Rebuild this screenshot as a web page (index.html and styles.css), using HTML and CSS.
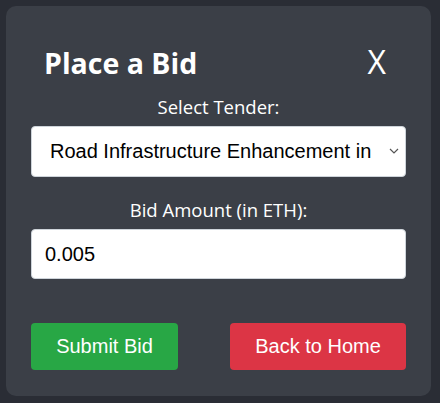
FILE: index.html
```html
<!DOCTYPE html>
<html>
<head>
<meta charset="utf-8">
<link rel="stylesheet" href="styles.css">
</head>
<body>
<div class="card">
  <div class="header">
    <h2 class="title">Place a Bid</h2>
    <span class="close">X</span>
  </div>
  <label class="label">Select Tender:</label>
  <div class="select-wrap">
    <div class="select">Road Infrastructure Enhancement in</div>
    <svg class="chev" width="10" height="6" viewBox="0 0 10 6"><path d="M1 1 L5 5 L9 1" fill="none" stroke="#555" stroke-width="1.2"/></svg>
  </div>
  <label class="label second">Bid Amount (in ETH):</label>
  <div class="input">0.005</div>
  <div class="buttons">
    <button class="btn green">Submit Bid</button>
    <button class="btn red">Back to Home</button>
  </div>
</div>
</body>
</html>
```

FILE: styles.css
```css
html, body { margin: 0; padding: 0; }
body {
  background: #2a2d35;
  width: 440px;
  height: 403px;
  padding: 6px 0 0 6px;
  box-sizing: border-box;
}
.card {
  width: 425px;
  height: 390px;
  box-sizing: border-box;
  background: #3b3f47;
  border-radius: 10px;
  padding: 0 25px;
  display: flex;
  flex-direction: column;
  font-family: "Open Sans", sans-serif;
  color: #fff;
}
.header {
  display: flex;
  justify-content: space-between;
  align-items: center;
  padding: 32px 20px 0 13px;
  height: 50px;
}
.title {
  margin: 0;
  font-size: 28.5px;
  font-weight: 700;
}
.close {
  font-family: "Open Sans", sans-serif;
  font-size: 32px;
  line-height: 40px;
  margin-top: -3px;
}
.label {
  display: block;
  text-align: center;
  font-size: 18.5px;
  line-height: 24px;
  margin-top: 7px;
  margin-bottom: 7px;
}
.label.second { margin-top: 21px; }
.select-wrap {
  position: relative;
}
.select, .input {
  background: #fff;
  border: 1px solid #ced4da;
  border-radius: 4px;
  height: 51px;
  box-sizing: border-box;
  color: #000;
  font-family: "Liberation Sans", Arial, sans-serif;
  font-size: 20px;
  display: flex;
  align-items: center;
}
.select { padding-left: 18px; }
.input { padding-left: 13px; height: 50px; }
.chev {
  position: absolute;
  right: 7px;
  top: 22px;
}
.buttons {
  display: flex;
  justify-content: space-between;
  margin-top: 44px;
}
.btn {
  height: 47px;
  border: none;
  border-radius: 4px;
  color: #fff;
  font-family: "Liberation Sans", Arial, sans-serif;
  font-size: 20px;
  padding: 0;
}
.green { background: #28a745; width: 147px; }
.red { background: #dc3545; width: 176px; }
```
